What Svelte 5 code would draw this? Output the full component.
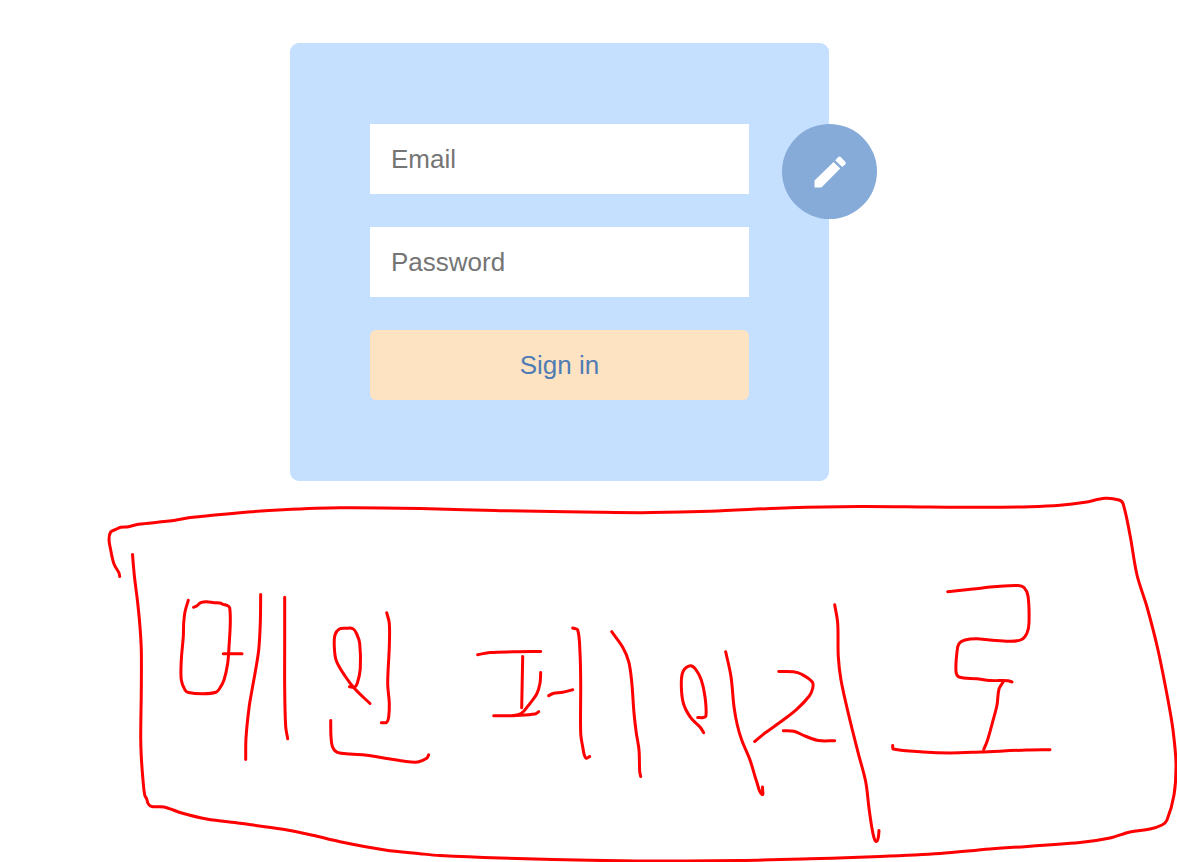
<script>
  let email = "";
  let password = "";

  // Red pen strokes, each a list of x,y points
  const strokes = [
    // frame
    "119.7,576.5 119,573 114,564 110.7,550 109,539 110.7,532 116,529.3 120.7,527.3 128.5,526.7 138.3,524.3 166.7,521.3 193,517.3 240,512.7 283,509.8 340,507.8 420,508.5 500,510.7 600,512.3 651,512.6 710,511.3 790,507.7 860,506.5 930,507 983,507.3 1030,506.7 1060,505.3 1085,502.3 1105,498.3 1119,500 1123,503.5 1130,535 1137,575 1147,607 1158,650 1168,700 1173,730 1176,764 1174,795 1167,820 1162,825 1150,829 1130,832 1110,838 1080,842.5 990,849 940,853.5 880,856.5 810,858.8 740,860.5 650,861 590,860.3 500,858 440,855.5 420,853.7 385,850 340,841.7 313,835.3 283,829.3 240,823.3 206.7,819 181.7,813 164,807 151.7,806.5 148.3,804 146.7,799 144.7,795 143,780 141.3,756.7 140.7,736.7 141.3,690 141.3,650 140,627 137.7,603 134.5,577 132.5,554.5",
    // 메
    "188.3,600.3 185,611.7 183.7,623 183.3,636.7 181.3,660 181.3,680 185,690 188.5,692.5 203.3,693.7 216,692.2 219.3,689 224,680 227.7,663.3 229,646.7 230.3,623 229.7,608 227.7,605.7 223,604.3 220,603 214,602.7 206.7,601.7 200.7,602.7 196.7,606 193.5,607.3",
    "223.3,653.7 242,653.7",
    "260.7,594.5 260.3,623 258.7,650 255.3,671.7 252,690 249,708 246,738 245.7,759.5",
    "284.7,597.3 284.7,640 284.7,690 285.7,726.7 287.7,738.7",
    // 인
    "349.5,686.7 354.3,687.3 357.3,683.3 360.3,668.3 359.7,643.3 356.7,634 353,628.7 346,628.3 339.3,629 335,635 334.3,646.7 336.3,660.7 345,676 355,689 370,703.5",
    "386.7,612.7 389.3,623.3 389.3,646.7 387.7,683.3 389.3,703.3 388.7,716.7 386.7,722.3 381.3,722.7",
    "330.7,720.5 331,736.7 332.7,747.3 337.3,752.3 350,754 366.7,755.3 386.7,758.5 403,761 417.7,762 426.7,758.3 428.7,754.7",
    // 페
    "477.7,654.7 490,652.5 513,651.8 540.7,651.5",
    "522.7,656.5 521.7,707.7",
    "540.7,672.5 540,683.3 536.7,694 530,703.3 523.3,711.7 518.3,714.7 511.7,715.7 493.7,715.7",
    "513,715.7 535,714 538.7,711.7",
    "548.7,695.7 553,693.5 562.7,692.3 572.7,689.7",
    "572.7,628 577.7,630 580,653 580.7,683 580.7,733 582.7,746.7 585.7,758 589.7,756.5",
    "611.7,631.7 622.7,647.3 628.7,661.7 631.7,681.7 634,713 636.3,733 639,750 639.7,771.7 640.7,776.5",
    // 이
    "697.7,717.5 703.3,717.5 706,715.7 705,696.7 701.3,680 695.7,669.3 690.3,665.7 683.3,671 681.3,683.3 683.3,703 690.7,717.7 700,727 703.7,732.7",
    "725.7,651.7 731,676.7 734,706.7 737.3,725 741.7,740 750,760 756.7,781.7 762,794.5 762.5,787",
    // 리
    "778.7,671.5 793.3,671.7 801.7,674.3 812.3,682 812.7,688.3 809.3,696 796.7,709.3 780,722.3 765,733 754.7,741.5",
    "783.3,730.7 794,731.3 805,736 818.3,740.5 834.7,740.7",
    "834.7,604.7 837.7,623.3 838.3,656.7 841,680 848.3,713.3 858.3,753.3 865.7,781.7 869,808.3 871.7,826.7 874,837.7 876.3,841.5 878.3,837.3 879,830.5",
    // 로
    "947.7,591.7 973,589 996.7,586.5 1018,585.5 1024,587.5 1028,596 1029,623 1027,633 1021.7,639.5 1010,641.3 990,640 976.7,638.8 965,640 959,643.7 957,651.7 956,671.7 959,677 976.7,678.7 990,680.5 1008,680.7 1012,682",
    "1003.3,681.7 999,689 997,705 992.7,721.7 987.3,740.7 983.7,749.5",
    "892.7,745.5 893.3,749 923,752 950,753 980,752 1026.7,750 1050,749.7",
  ];

  // Runs a smooth curve through all the points of a stroke
  function smooth(stroke) {
    const pts = stroke.split(" ").map((pair) => pair.split(",").map(Number));
    let d = `M${pts[0]}`;

    for (let i = 0; i < pts.length - 1; i++) {
      const p1 = pts[i];
      const p2 = pts[i + 1];
      const p0 = pts[i - 1] || p1;
      const p3 = pts[i + 2] || p2;
      // handles never get longer than a third of the segment
      const len = Math.hypot(p2[0] - p1[0], p2[1] - p1[1]) / 3;
      const a = handle(p0, p2, len);
      const b = handle(p1, p3, len);
      d += `C${p1[0] + a[0]} ${p1[1] + a[1]} ${p2[0] - b[0]} ${p2[1] - b[1]} ${p2}`;
    }

    return d;
  }

  function handle(from, to, len) {
    const dx = to[0] - from[0];
    const dy = to[1] - from[1];
    const size = Math.hypot(dx, dy) || 1;
    return [(dx / size) * len, (dy / size) * len];
  }
</script>

<svelte:head>
  <title>Sign in</title>
</svelte:head>

<main>
  <form class="card" on:submit|preventDefault>
    <input type="email" placeholder="Email" aria-label="Email" bind:value={email} />
    <input
      type="password"
      placeholder="Password"
      aria-label="Password"
      bind:value={password} />
    <button class="sign-in" type="submit">Sign in</button>

    <button class="edit" type="button" aria-label="Edit">
      <svg viewBox="0 0 42 42" aria-hidden="true">
        <path d="M5.500 29.600 24.600 10.900 31.200 17.400 12.400 36.500H5.500z" />
        <path
          d="M26.200 9.200 29.200 6.200Q30.500 5 31.800 6.200L36.300 10.700Q37.500 12 36.300 13.200L33.200 16z" />
      </svg>
    </button>
  </form>
</main>

<svg class="note" viewBox="0 490 1177 372" role="img" aria-label="메인 페이리로">
  {#each strokes as stroke}
    <path d={smooth(stroke)} />
  {/each}
</svg>

<style>
  :global(body) {
    margin: 0;
    background: #fff;
  }

  main {
    padding: 43px 58px 0 0;
    font-family: Arial, "Liberation Sans", sans-serif;
  }

  .card {
    position: relative;
    box-sizing: border-box;
    display: flex;
    flex-direction: column;
    gap: 33px;
    width: 100%;
    max-width: 539px;
    margin: 0 auto;
    padding: 81px 80px;
    border-radius: 9px;
    background: #c5dfff;
  }

  input,
  .sign-in {
    box-sizing: border-box;
    width: 100%;
    height: 70px;
    margin: 0;
    padding: 20px 21px;
    border: none;
    font-family: inherit;
    font-size: 26px;
    line-height: 30px;
  }

  input {
    border-radius: 0;
    background: #fff;
    color: #333;
  }

  input::placeholder {
    color: #757575;
    opacity: 1;
  }

  .sign-in {
    border-radius: 6px;
    background: #fee3c3;
    color: #4f7cb5;
    cursor: pointer;
  }

  .edit {
    position: absolute;
    top: 81px;
    right: -48px;
    display: flex;
    align-items: center;
    justify-content: center;
    width: 95px;
    height: 95px;
    padding: 0;
    border: none;
    border-radius: 50%;
    background: #86abd9;
    cursor: pointer;
  }

  .edit svg {
    width: 42px;
    height: 42px;
    fill: #fff;
  }

  .note {
    display: block;
    width: 100%;
    margin-top: 9px;
  }

  .note path {
    fill: none;
    stroke: #f00;
    stroke-width: 3;
    stroke-linecap: round;
    stroke-linejoin: round;
  }
</style>
